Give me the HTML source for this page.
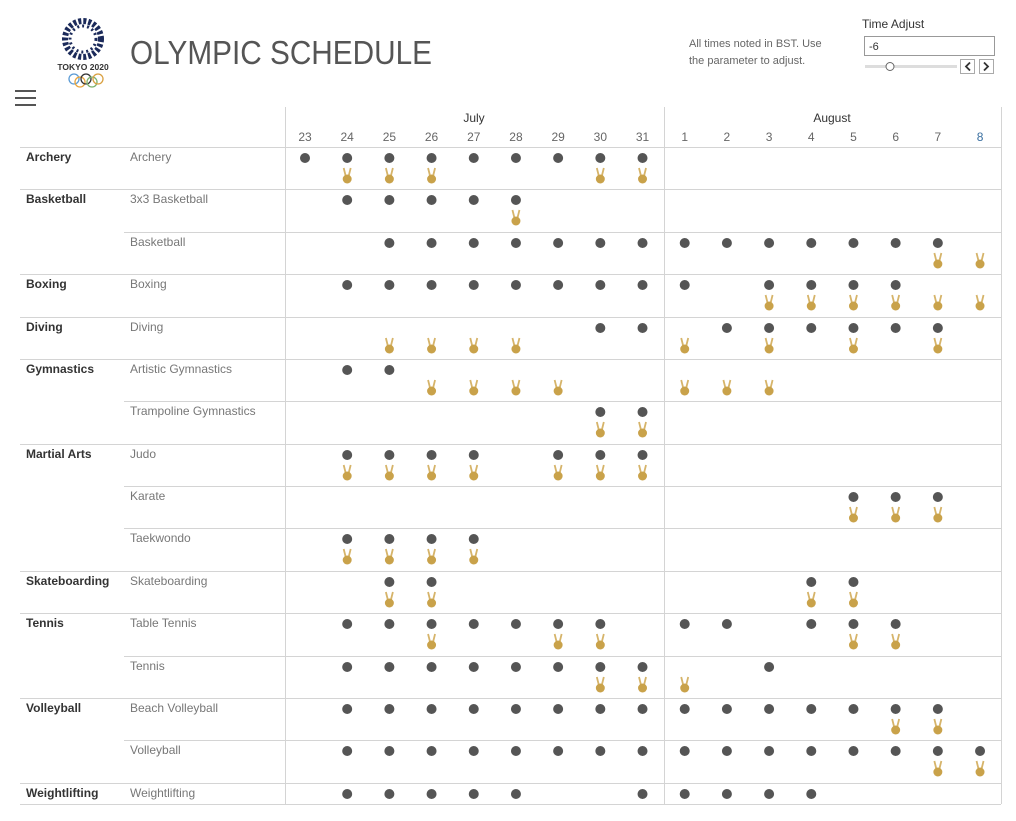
<!DOCTYPE html>
<html><head><meta charset="utf-8"><style>
body{margin:0;width:1016px;height:821px;background:#fff;font-family:"Liberation Sans",sans-serif;position:relative;overflow:hidden}
.a{position:absolute;white-space:nowrap}
</style></head><body>
<svg class="a" style="left:0;top:0" width="1016" height="821" id="s">
<g fill="#1b2a5a">
<circle cx="83" cy="39" r="18" fill="none" stroke="#1b2a5a" stroke-width="6" stroke-dasharray="3 2"/>
<circle cx="83" cy="39" r="13" fill="none" stroke="#1b2a5a" stroke-width="3" stroke-dasharray="2 3"/>
</g>
<text x="83" y="70" font-size="8.5" font-weight="bold" fill="#333" text-anchor="middle" font-family="Liberation Sans">TOKYO 2020</text>
<g fill="none" stroke-width="1.3">
<circle cx="74" cy="79" r="5" stroke="#5b9bd5"/><circle cx="80" cy="82" r="5" stroke="#e8a43a"/><circle cx="86" cy="79" r="5" stroke="#333"/><circle cx="92" cy="82" r="5" stroke="#7ab06a"/><circle cx="98" cy="79" r="5" stroke="#d9a040"/>
</g>
<text x="130" y="64" font-size="33" fill="#555" font-family="Liberation Sans" textLength="302" lengthAdjust="spacingAndGlyphs">OLYMPIC SCHEDULE</text>
<g fill="#555"><rect x="15" y="90" width="21" height="2"/><rect x="15" y="97" width="21" height="2"/><rect x="15" y="104" width="21" height="2"/></g>
<text x="689" y="47" font-size="11" fill="#666">All times noted in BST. Use</text>
<text x="689" y="64" font-size="11" fill="#666">the parameter to adjust.</text>
<text x="862" y="28" font-size="12" fill="#333">Time Adjust</text>
<rect x="864.5" y="36.5" width="130" height="19" fill="#fff" stroke="#999"/>
<text x="869" y="50" font-size="11" fill="#333">-6</text>
<rect x="865" y="65" width="92" height="3" fill="#ddd"/>
<circle cx="890" cy="66.5" r="4" fill="#fff" stroke="#666"/>
<rect x="960.5" y="59.5" width="14" height="14" fill="#fff" stroke="#aaa"/><rect x="979.5" y="59.5" width="14" height="14" fill="#fff" stroke="#aaa"/>
<path d="M970 62.5l-4 4 4 4M984 62.5l4 4-4 4" fill="none" stroke="#333" stroke-width="1.8"/>
<text x="474" y="122" font-size="12" fill="#333" text-anchor="middle">July</text>
<text x="832" y="122" font-size="12" fill="#333" text-anchor="middle">August</text>
<g id="g"></g>
<defs>
<g id="m"><path d="M-3.5 -11 L-1 -1 M3.5 -11 L1 -1" stroke="#d6b46a" stroke-width="1.8" fill="none"/><circle cx="0" cy="0" r="4.5" fill="#c9a24a"/></g>
</defs>
</svg>
<script>
var s=document.getElementById('g'),h='';
var days=[23,24,25,26,27,28,29,30,31,1,2,3,4,5,6,7,8];
function X(i){return 305+i*42.19;}
days.forEach(function(d,i){h+='<text x="'+X(i)+'" y="141" font-size="12" fill="'+(i==16?'#3a6fa0':'#666')+'" text-anchor="middle">'+d+'</text>';});
var tops=[147,189,232,274,317,359,401,444,486,528,571,613,656,698,740,783,804];
var R=[
["Archery","Archery",[0,1,2,3,4,5,6,7,8],[1,2,3,7,8]],
["Basketball","3x3 Basketball",[1,2,3,4,5],[5]],
["","Basketball",[2,3,4,5,6,7,8,9,10,11,12,13,14,15],[15,16]],
["Boxing","Boxing",[1,2,3,4,5,6,7,8,9,11,12,13,14],[11,12,13,14,15,16]],
["Diving","Diving",[7,8,10,11,12,13,14,15],[2,3,4,5,9,11,13,15]],
["Gymnastics","Artistic Gymnastics",[1,2],[3,4,5,6,9,10,11]],
["","Trampoline Gymnastics",[7,8],[7,8]],
["Martial Arts","Judo",[1,2,3,4,6,7,8],[1,2,3,4,6,7,8]],
["","Karate",[13,14,15],[13,14,15]],
["","Taekwondo",[1,2,3,4],[1,2,3,4]],
["Skateboarding","Skateboarding",[2,3,12,13],[2,3,12,13]],
["Tennis","Table Tennis",[1,2,3,4,5,6,7,9,10,12,13,14],[3,6,7,13,14]],
["","Tennis",[1,2,3,4,5,6,7,8,11],[7,8,9]],
["Volleyball","Beach Volleyball",[1,2,3,4,5,6,7,8,9,10,11,12,13,14,15],[14,15]],
["","Volleyball",[1,2,3,4,5,6,7,8,9,10,11,12,13,14,15,16],[15,16]],
["Weightlifting","Weightlifting",[1,2,3,4,5,8,9,10,11,12],[]]];
h+='<line x1="20" y1="147.5" x2="1001" y2="147.5" stroke="#d4d4d4"/>';
R.forEach(function(r,k){var t=tops[k];
 if(k>0)h+='<line x1="'+(r[0]?20:124)+'" y1="'+(t+.5)+'" x2="1001" y2="'+(t+.5)+'" stroke="#d4d4d4"/>';
 if(r[0])h+='<text x="26" y="'+(t+14)+'" font-size="12" font-weight="bold" fill="#333">'+r[0]+'</text>';
 h+='<text x="130" y="'+(t+14)+'" font-size="12" fill="#777">'+r[1]+'</text>';
 r[2].forEach(function(i){h+='<circle cx="'+X(i)+'" cy="'+(t+11)+'" r="5" fill="#555"/>';});
 r[3].forEach(function(i){h+='<use href="#m" x="'+X(i)+'" y="'+(t+32)+'"/>';});
});
h+='<line x1="20" y1="804.5" x2="1001" y2="804.5" stroke="#d4d4d4"/>';
[285,664,1001].forEach(function(x){h+='<line x1="'+(x+.5)+'" y1="107" x2="'+(x+.5)+'" y2="804" stroke="#d4d4d4"/>';});
s.innerHTML=h;
</script>
</body></html>
